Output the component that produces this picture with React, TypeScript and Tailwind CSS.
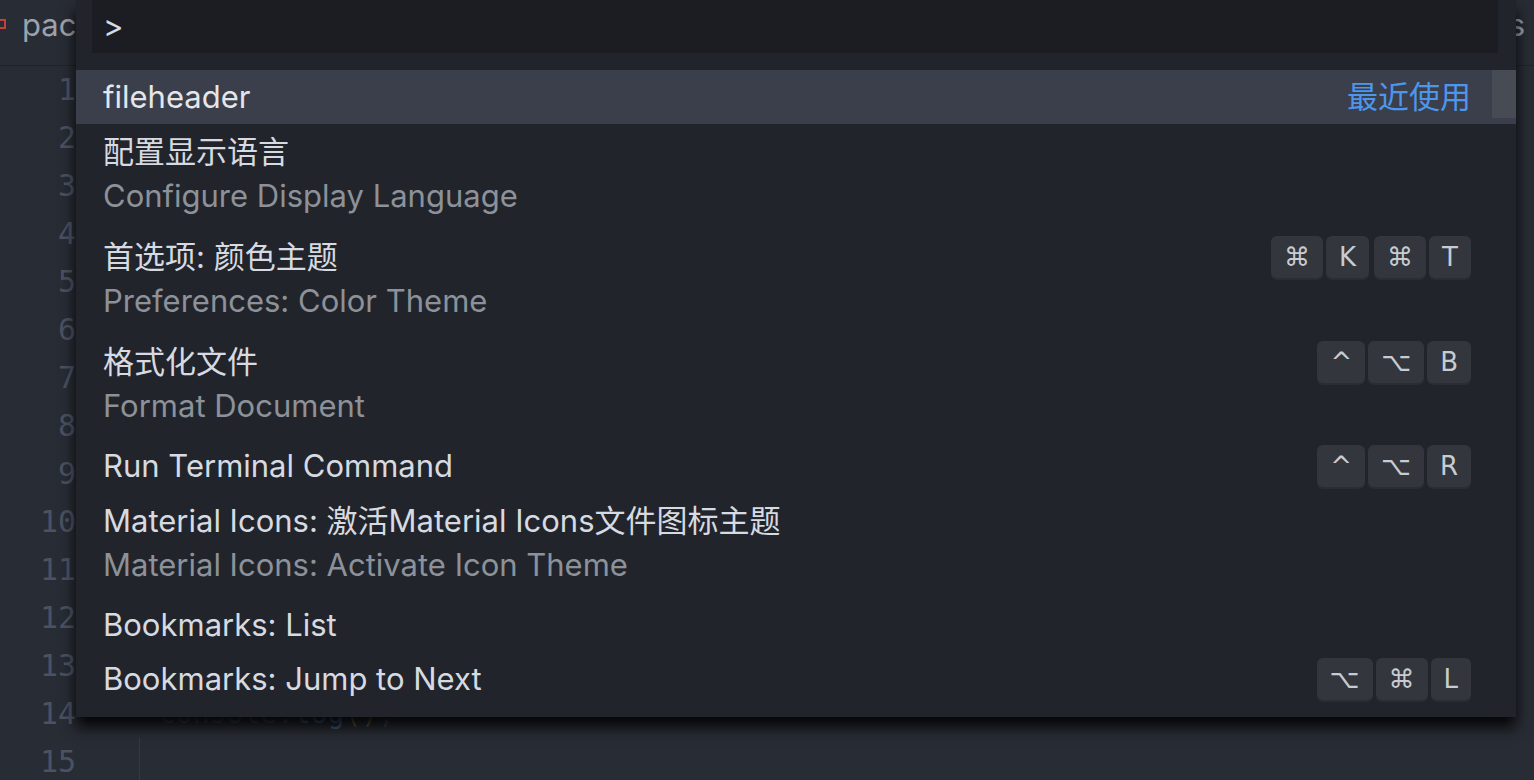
type Row = {
  label: string;
  detail?: string;
  keys?: string[][];
  selected?: boolean;
  recent?: boolean;
};

const rows: Row[] = [
  { label: 'fileheader', selected: true, recent: true },
  { label: '配置显示语言', detail: 'Configure Display Language' },
  { label: '首选项: 颜色主题', detail: 'Preferences: Color Theme', keys: [['⌘', 'K'], ['⌘', 'T']] },
  { label: '格式化文件', detail: 'Format Document', keys: [['^', '⌥', 'B']] },
  { label: 'Run Terminal Command', keys: [['^', '⌥', 'R']] },
  { label: 'Material Icons: 激活Material Icons文件图标主题', detail: 'Material Icons: Activate Icon Theme' },
  { label: 'Bookmarks: List' },
  { label: 'Bookmarks: Jump to Next', keys: [['⌥', '⌘', 'L']] },
];

const lineNumbers = Array.from({ length: 15 }, (_, i) => i + 1);

function Keys({ chords }: { chords: string[][] }) {
  return (
    <div className="flex items-center gap-[5px]">
      {chords.map((chord, ci) => (
        <div key={ci} className="flex items-center gap-[3px]">
          {chord.map((k, ki) => (
            <span
              key={ki}
              className="h-[42px] px-[13px] flex items-center justify-center rounded-[6px] bg-[#33363c] shadow-[0_2px_0_#2a2d32] text-[26px] text-[#c8cbd0] font-['DejaVu_Sans',sans-serif]"
            >
              {k}
            </span>
          ))}
        </div>
      ))}
    </div>
  );
}

function PaletteRow({ row }: { row: Row }) {
  return (
    <div
      className={`flex flex-col pl-[27px] pr-[45px] ${row.detail ? 'pt-[6px] pb-[11px]' : 'py-[5px]'} ${
        row.selected ? 'bg-[#3a3f4b]' : ''
      }`}
    >
      <div className="h-[44px] flex items-center justify-between">
        <span className={row.selected ? 'text-[#e4e6ea]' : 'text-[#d7dae0]'}>{row.label}</span>
        {row.recent && <span className="text-[#4d96ec]">最近使用</span>}
        {row.keys && <Keys chords={row.keys} />}
      </div>
      {row.detail && <div className="h-[44px] flex items-center text-[#8d9199]">{row.detail}</div>}
    </div>
  );
}

export default function App() {
  return (
    <div className="relative w-[1534px] h-[780px] overflow-hidden bg-[#282c34] font-[Inter,'Noto_Sans_CJK_SC',sans-serif]">
      {/* tab bar */}
      <div className="h-[66px] flex items-center justify-between bg-[#282c34] border-b border-[#202328]">
        <div className="flex items-center h-full">
          <span className="w-[6px] h-[10px] border-2 border-l-0 border-[#c2403a] mb-[18px]" />
          <span className="ml-[16px] mb-[14px] text-[31px] text-[#9da2ab]">pac</span>
        </div>
        <span className="mr-[9px] mb-[14px] text-[31px] text-[#9da2ab]">s</span>
      </div>

      {/* editor */}
      <div className="flex">
        <div className="w-[76px] flex flex-col items-end font-['DejaVu_Sans_Mono',monospace] text-[30px] text-[#4b5263]">
          {lineNumbers.map((n) => (
            <div key={n} className="h-[48px] leading-[48px]">
              {n}
            </div>
          ))}
        </div>
        <div className="flex-1 flex flex-col pl-[63px] font-['DejaVu_Sans_Mono',monospace] text-[28px]">
          <div className="h-[624px]" />
          <div className="h-[48px] leading-[48px] pl-[20px] text-[#3e434b]">
            console.<span className="text-[#3f5f80]">log</span>
            <span className="text-[#6b5a3e]">()</span>;
          </div>
          <div className="h-[48px] border-l border-[#353a42]" />
        </div>
      </div>

      {/* command palette */}
      <div className="absolute left-[76px] top-0 w-[1440px] h-[717px] bg-[#21252b] shadow-[0_10px_14px_rgba(0,0,0,0.9)] text-[31px]">
        <div className="pl-[16px] pr-[18px]">
          <div className="h-[53px] bg-[#1b1d22] flex items-center pl-[11px] text-[#d7dae0]">&gt;</div>
        </div>
        <div className="relative mt-[17px]">
          {rows.map((r, i) => (
            <PaletteRow key={i} row={r} />
          ))}
          <div className="absolute right-0 top-0 w-[24px] h-[48px] bg-[#474b53]" />
        </div>
      </div>
    </div>
  );
}
